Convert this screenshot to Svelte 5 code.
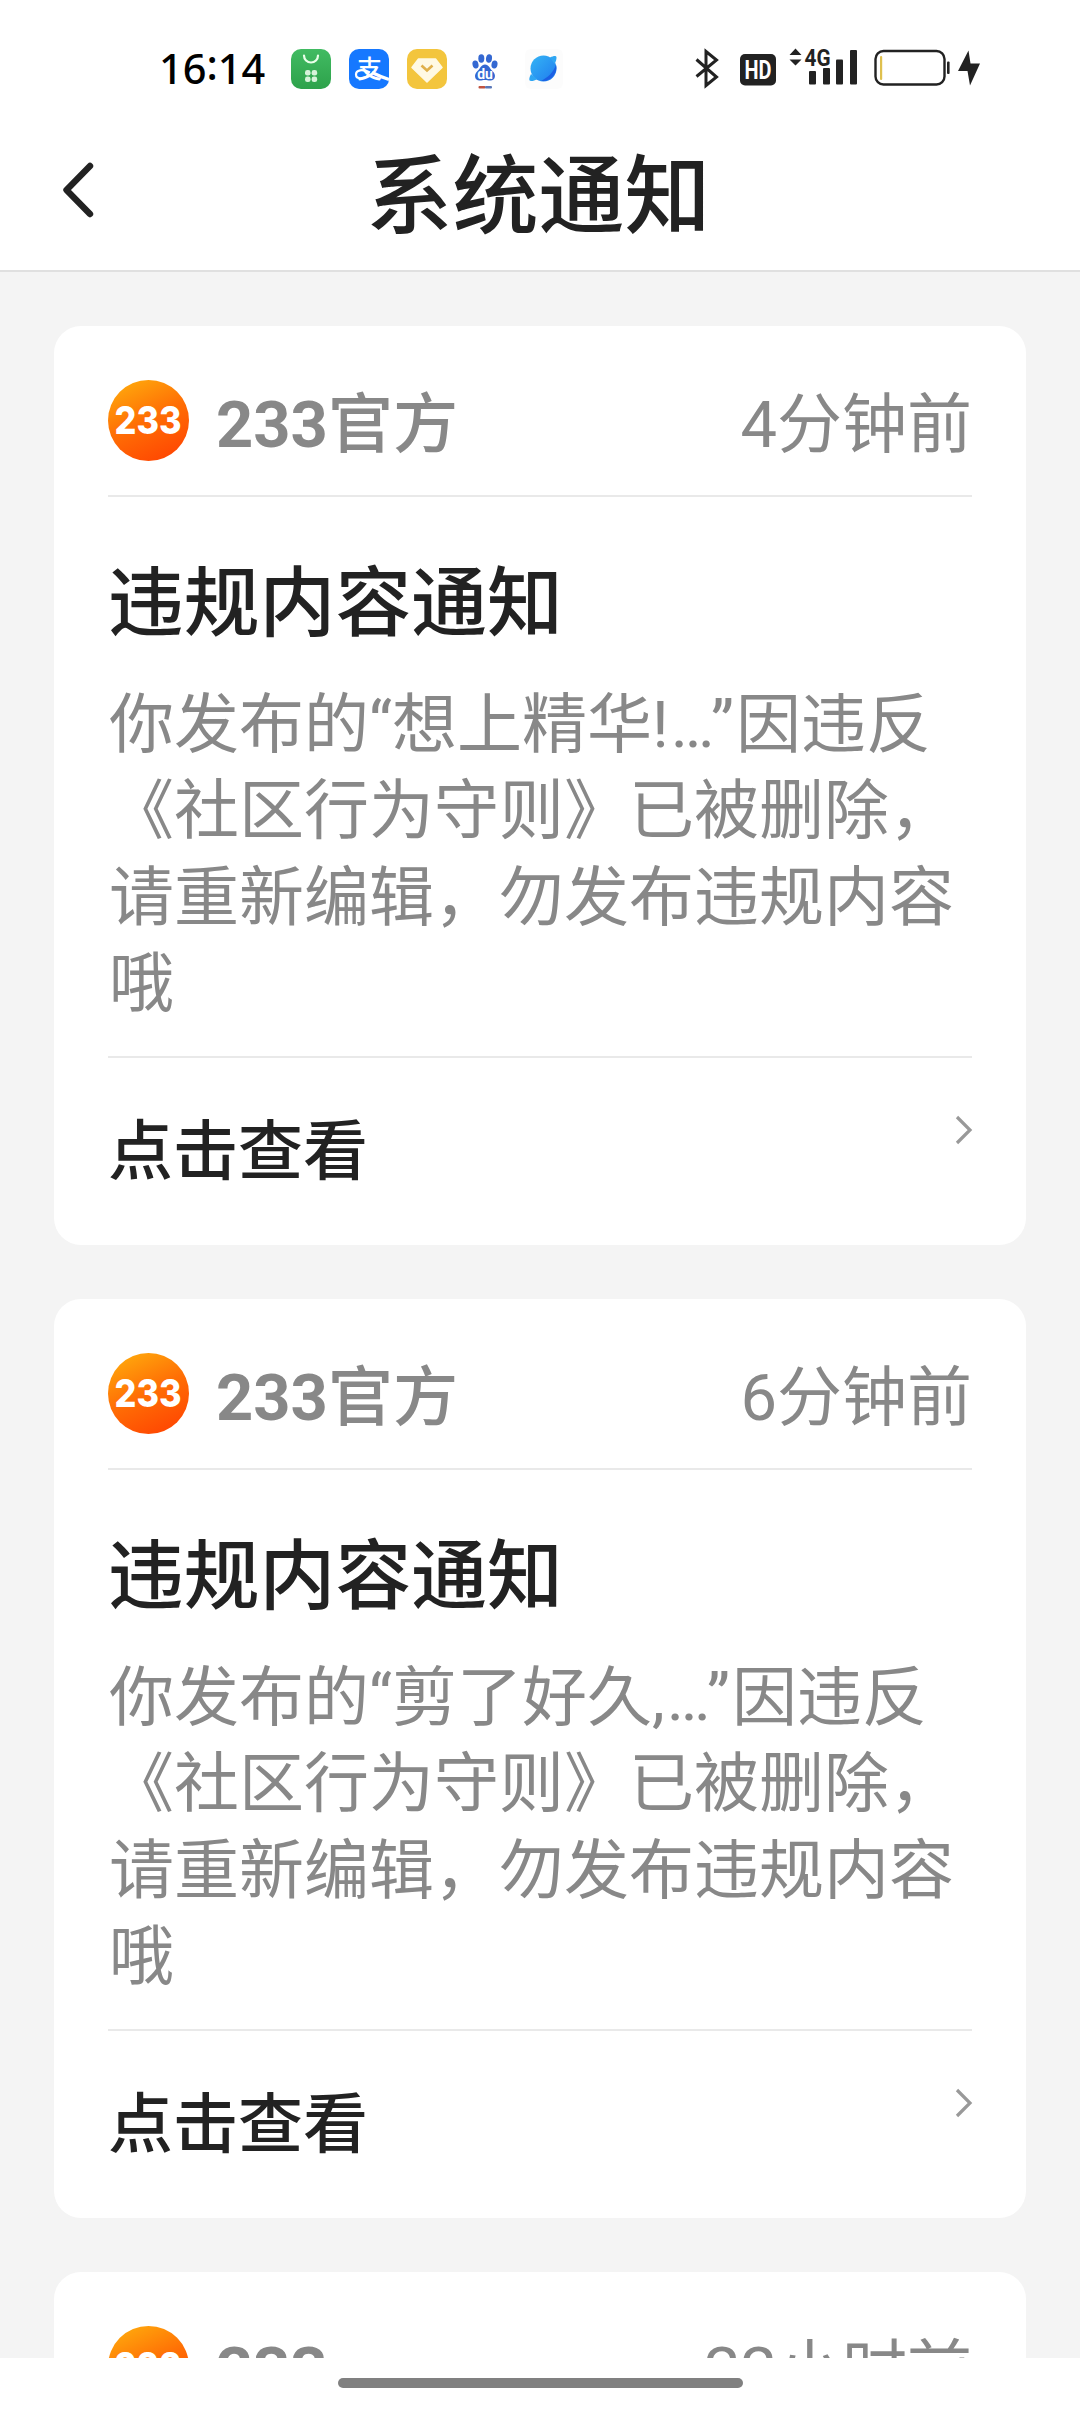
<!--
  System notification page: status bar, title bar and a scrolling list of cards.
-->

<script lang="ts">
  type Notice = {
    sender: string;
    time: string;
    title: string;
    post: string;
    mark: string;
  };

  const rule = "因违反《社区行为守则》已被删除，请重新编辑，勿发布违规内容哦";

  const notices: Notice[] = [
    { sender: "官方", time: "4分钟前", title: "违规内容通知", post: "想上精华", mark: "!" },
    { sender: "官方", time: "6分钟前", title: "违规内容通知", post: "剪了好久", mark: "," },
  ];
</script>

<div class="screen">
  <div class="status-bar">
    <span class="clock">16<span class="colon">:</span>14</span>

    <div class="app-icons">
      <!-- App store -->
      <svg width="40" height="40" viewBox="0 0 40 40">
        <defs>
          <linearGradient id="green" x1="0" y1="0" x2="0" y2="1">
            <stop offset="0" stop-color="#41bb62" />
            <stop offset="1" stop-color="#2da24b" />
          </linearGradient>
        </defs>
        <rect width="40" height="40" rx="10" fill="url(#green)" />
        <path d="M13 6.5a7 7 0 0 0 14 0" fill="none" stroke="#e9ffe9" stroke-width="2.2" stroke-linecap="round" />
        <g fill="#d6f3da">
          <rect x="14" y="21" width="5.6" height="5.6" rx="2.4" />
          <rect x="20.6" y="21" width="5.6" height="5.6" rx="2.4" />
          <rect x="14" y="27.5" width="5.6" height="5.6" rx="2.4" />
          <rect x="20.6" y="27.5" width="5.6" height="5.6" rx="2.4" />
        </g>
      </svg>

      <!-- Alipay -->
      <svg width="40" height="40" viewBox="0 0 40 40">
        <rect width="40" height="40" rx="10" fill="#1678ff" />
        <text class="pay" x="20.5" y="28.5" text-anchor="middle">支</text>
        <path d="M23 23.500Q31 27.500 40 30.500" fill="none" stroke="#fff" stroke-width="3.2" />
        <path d="M21 23.500C13 19.500 7 21 7 25.500c0 5 8 5 13.500 0" fill="none" stroke="#fff" stroke-width="2.2" />
      </svg>

      <!-- Diamond -->
      <svg width="40" height="40" viewBox="0 0 40 40">
        <rect width="40" height="40" rx="10" fill="#f3c53d" />
        <path d="M11.5 10h17l6.5 8.5L20 33 5 18.500z" fill="#fff9e3" stroke="#fff9e3" stroke-width="1.5" stroke-linejoin="round" />
        <path d="M14.5 16.5l5.500 5 5.500-5" fill="none" stroke="#e0b04a" stroke-width="2.6" />
      </svg>

      <!-- Baidu -->
      <svg width="40" height="40" viewBox="0 0 40 40">
        <g fill="#3468d2">
          <ellipse cx="10.5" cy="15.5" rx="3" ry="4" transform="rotate(-12 10.5 15.5)" />
          <ellipse cx="16.3" cy="9.5" rx="3" ry="4.2" />
          <ellipse cx="24" cy="9.5" rx="3" ry="4.2" transform="rotate(8 24 9.5)" />
          <ellipse cx="29.5" cy="15.5" rx="3" ry="4" transform="rotate(10 29.5 15.5)" />
          <path d="M20 15.5c4 0 4.500 4 7.500 6.500 4 3.500 3 9.500-2 9.500-3 0-3-.5-5.500-.5s-2.500.5-5.500.5c-5 0-6-6-2-9.500 3-2.500 3.500-6.500 7.500-6.500z" />
        </g>
        <text class="du" x="20" y="30" text-anchor="middle">du</text>
        <rect x="13.5" y="37" width="7" height="2.5" rx="1" fill="#c0533f" />
        <rect x="20" y="37" width="7" height="2.5" rx="1" fill="#5a78b8" />
      </svg>

      <!-- Browser planet -->
      <svg width="40" height="40" viewBox="0 0 40 40">
        <defs>
          <linearGradient id="planet" x1="0" y1="0" x2="1" y2="1">
            <stop offset="0" stop-color="#35b5f5" />
            <stop offset="1" stop-color="#1f7bee" />
          </linearGradient>
        </defs>
        <rect x="2" width="38" height="40" rx="6" fill="#fcfcfc" />
        <circle cx="20.5" cy="19.5" r="13" fill="url(#planet)" />
        <path d="M8 25c-2 4-2.500 7 0 7s4-.5 6-2zM27 8.500c4-2 6.500-2 6.500 0s-.5 4-2 6.500z" fill="#2fa6f3" />
        <path d="M33 16c2 7-4 17-15 16 6-3 12-8 15-16z" fill="#1b5fe3" />
      </svg>
    </div>

    <div class="system-icons">
      <svg width="310" height="50" viewBox="690 45 310 50">
        <!-- Bluetooth -->
        <path d="M696.5 60.5L716.5 78 706 86.500V52.500L716.5 61 696.500 77.500" fill="none" stroke="#222" stroke-width="3" />
        <!-- HD -->
        <rect x="740" y="55" width="36" height="31.5" rx="5" fill="#222" />
        <text class="hd" x="758" y="80" text-anchor="middle" textLength="27" lengthAdjust="spacingAndGlyphs">HD</text>
        <!-- Mobile data -->
        <path d="M789.5 56l6-6.500 6 6.500zM789.500 60.500l6 6 6-6z" fill="#222" />
        <text class="net" x="804.5" y="66.5" textLength="26" lengthAdjust="spacingAndGlyphs">4G</text>
        <g fill="#222">
          <rect x="809" y="72" width="7" height="13.5" rx="1" />
          <rect x="823" y="69" width="7" height="16.5" rx="1" />
          <rect x="836" y="60.5" width="7" height="25" rx="1" />
          <rect x="850" y="51" width="7" height="34.5" rx="1" />
        </g>
        <!-- Battery, charging -->
        <rect x="875.5" y="52" width="69" height="33.500" rx="8" fill="none" stroke="#222" stroke-width="2.4" />
        <rect x="880" y="57" width="2.2" height="24" rx="1" fill="#dfc04e" />
        <rect x="947" y="62.5" width="2.6" height="12.5" rx="1" fill="#222" />
        <path d="M968.5 51.5l-10.500 20.500h9.500l2.500 14.500 10-22h-9.500z" fill="#222" />
      </svg>
    </div>
  </div>

  <header>
    <svg class="back" width="36" height="60" viewBox="0 0 36 60">
      <path d="M30 6L6.500 30 30 54" fill="none" stroke="#222" stroke-width="6.4" stroke-linecap="round" stroke-linejoin="round" />
    </svg>
    <h1>系统通知</h1>
  </header>

  {#snippet head(sender: string, time: string)}
    <div class="card-head">
      <svg class="avatar" width="81" height="81" viewBox="0 0 81 81">
        <defs>
          <linearGradient id="orange" x1="0.15" y1="0.05" x2="0.6" y2="1">
            <stop offset="0" stop-color="#ffa70c" />
            <stop offset="0.5" stop-color="#ff6f05" />
            <stop offset="1" stop-color="#ff4a02" />
          </linearGradient>
        </defs>
        <circle cx="40.5" cy="40.5" r="40.5" fill="url(#orange)" />
        <text class="logo" x="40" y="54" text-anchor="middle" textLength="67" lengthAdjust="spacingAndGlyphs">233</text>
      </svg>
      <span class="name"><b>233</b>{sender}</span>
      <span class="time">{time}</span>
    </div>
  {/snippet}

  <main>
    {#each notices as notice}
      <article class="card">
        {@render head(notice.sender, notice.time)}
        <div class="card-body">
          <h2>{notice.title}</h2>
          <p>你发布的“{notice.post}<span class="tail">{notice.mark}…”</span>{rule}</p>
        </div>
        <div class="card-foot">
          <span>点击查看</span>
          <svg class="arrow" width="20" height="32" viewBox="0 0 20 32">
            <path d="M4 3l13 13L4 29" fill="none" stroke="#999" stroke-width="3.2" />
          </svg>
        </div>
      </article>
    {/each}

    <!-- Next card, scrolled half out of view -->
    <article class="card">
      {@render head("", "22小时前")}
    </article>
  </main>

  <div class="nav-bar">
    <div class="handle"></div>
  </div>
</div>

<style>
  :global(body) {
    margin: 0;
    background-color: #fff;
  }

  .screen {
    display: flex;
    flex-direction: column;
    width: 1080px;
    height: 2412px;
    overflow: hidden;

    font-family: Roboto, "Noto Sans CJK SC", sans-serif;
    color: #222;
    background-color: #fff;
  }

  svg {
    display: block;
  }

  /* Status bar */
  .status-bar {
    box-sizing: border-box;
    flex: none;
    display: flex;
    align-items: center;
    height: 138px;
    padding: 0 80px 0 159px;
  }

  .clock {
    width: 132px;
    margin-top: -3px;
    font-family: "Noto Sans", sans-serif;
    font-size: 41.5px;
    font-weight: 500;
    color: #000;
  }

  .colon {
    position: relative;
    top: -4px;
  }

  .app-icons {
    display: flex;
    gap: 18px;
  }

  .system-icons {
    margin-left: auto;
  }

  .pay {
    font-family: "Noto Sans CJK SC", sans-serif;
    font-size: 25px;
    font-weight: 500;
    fill: #fff;
  }

  .du {
    font-family: Roboto, sans-serif;
    font-size: 14px;
    font-weight: 700;
    fill: #fff;
  }

  .hd {
    font-size: 26px;
    font-weight: 700;
    fill: #fff;
  }

  .net {
    font-size: 24px;
    font-weight: 700;
    fill: #222;
  }

  /* Title bar */
  header {
    box-sizing: border-box;
    flex: none;
    display: grid;
    grid-template-columns: 120px 1fr 120px;
    height: 134px;
    border-bottom: 2px solid #e0e0e0;
  }

  .back {
    margin-top: 22px;
    margin-left: 60px;
  }

  h1 {
    margin: 0 3px 0 0;
    font-size: 86px;
    font-weight: 500;
    line-height: 120px;
    text-align: center;
  }

  /* Notice list */
  main {
    flex: 1;
    min-height: 0;
    overflow: hidden;
    display: flex;
    flex-direction: column;
    gap: 54px;
    padding: 54px 54px 0;
    background-color: #f4f4f4;
  }

  .card {
    box-sizing: border-box;
    flex: none;
    height: 919px;
    padding: 54px 54px 0;
    border-radius: 27px;
    background-color: #fff;
  }

  .card-head {
    display: flex;
    height: 115px;
    border-bottom: 2px solid #e9e9e9;
    font-size: 65px;
    line-height: 91px;
    color: #888;
  }

  .logo {
    font-family: Inter, sans-serif;
    font-size: 38px;
    font-weight: 800;
    fill: #fff;
  }

  .name {
    margin-left: 27px;
    font-weight: 500;
  }

  .time {
    margin-left: auto;
  }

  .card-body {
    height: 559px;
    border-bottom: 2px solid #e9e9e9;
  }

  h2 {
    margin: 0;
    padding-top: 64px;
    font-size: 75.8px;
    font-weight: 500;
    line-height: 88px;
  }

  p {
    margin: 33px -1px 0 1px;
    font-size: 65px;
    line-height: 86.3px;
    color: #888;
    text-spacing-trim: space-all;
  }

  .tail {
    letter-spacing: 2px;
  }

  .card-foot {
    display: flex;
    justify-content: space-between;
    padding-top: 51px;
    font-size: 65px;
    font-weight: 500;
    line-height: 86px;
  }

  .arrow {
    margin-top: 5px;
    margin-right: -1px;
  }

  /* Gesture bar */
  .nav-bar {
    flex: none;
    display: flex;
    justify-content: center;
    height: 34px;
    padding-top: 20px;
  }

  .handle {
    width: 405px;
    height: 10px;
    border-radius: 5px;
    background-color: #808080;
  }
</style>
